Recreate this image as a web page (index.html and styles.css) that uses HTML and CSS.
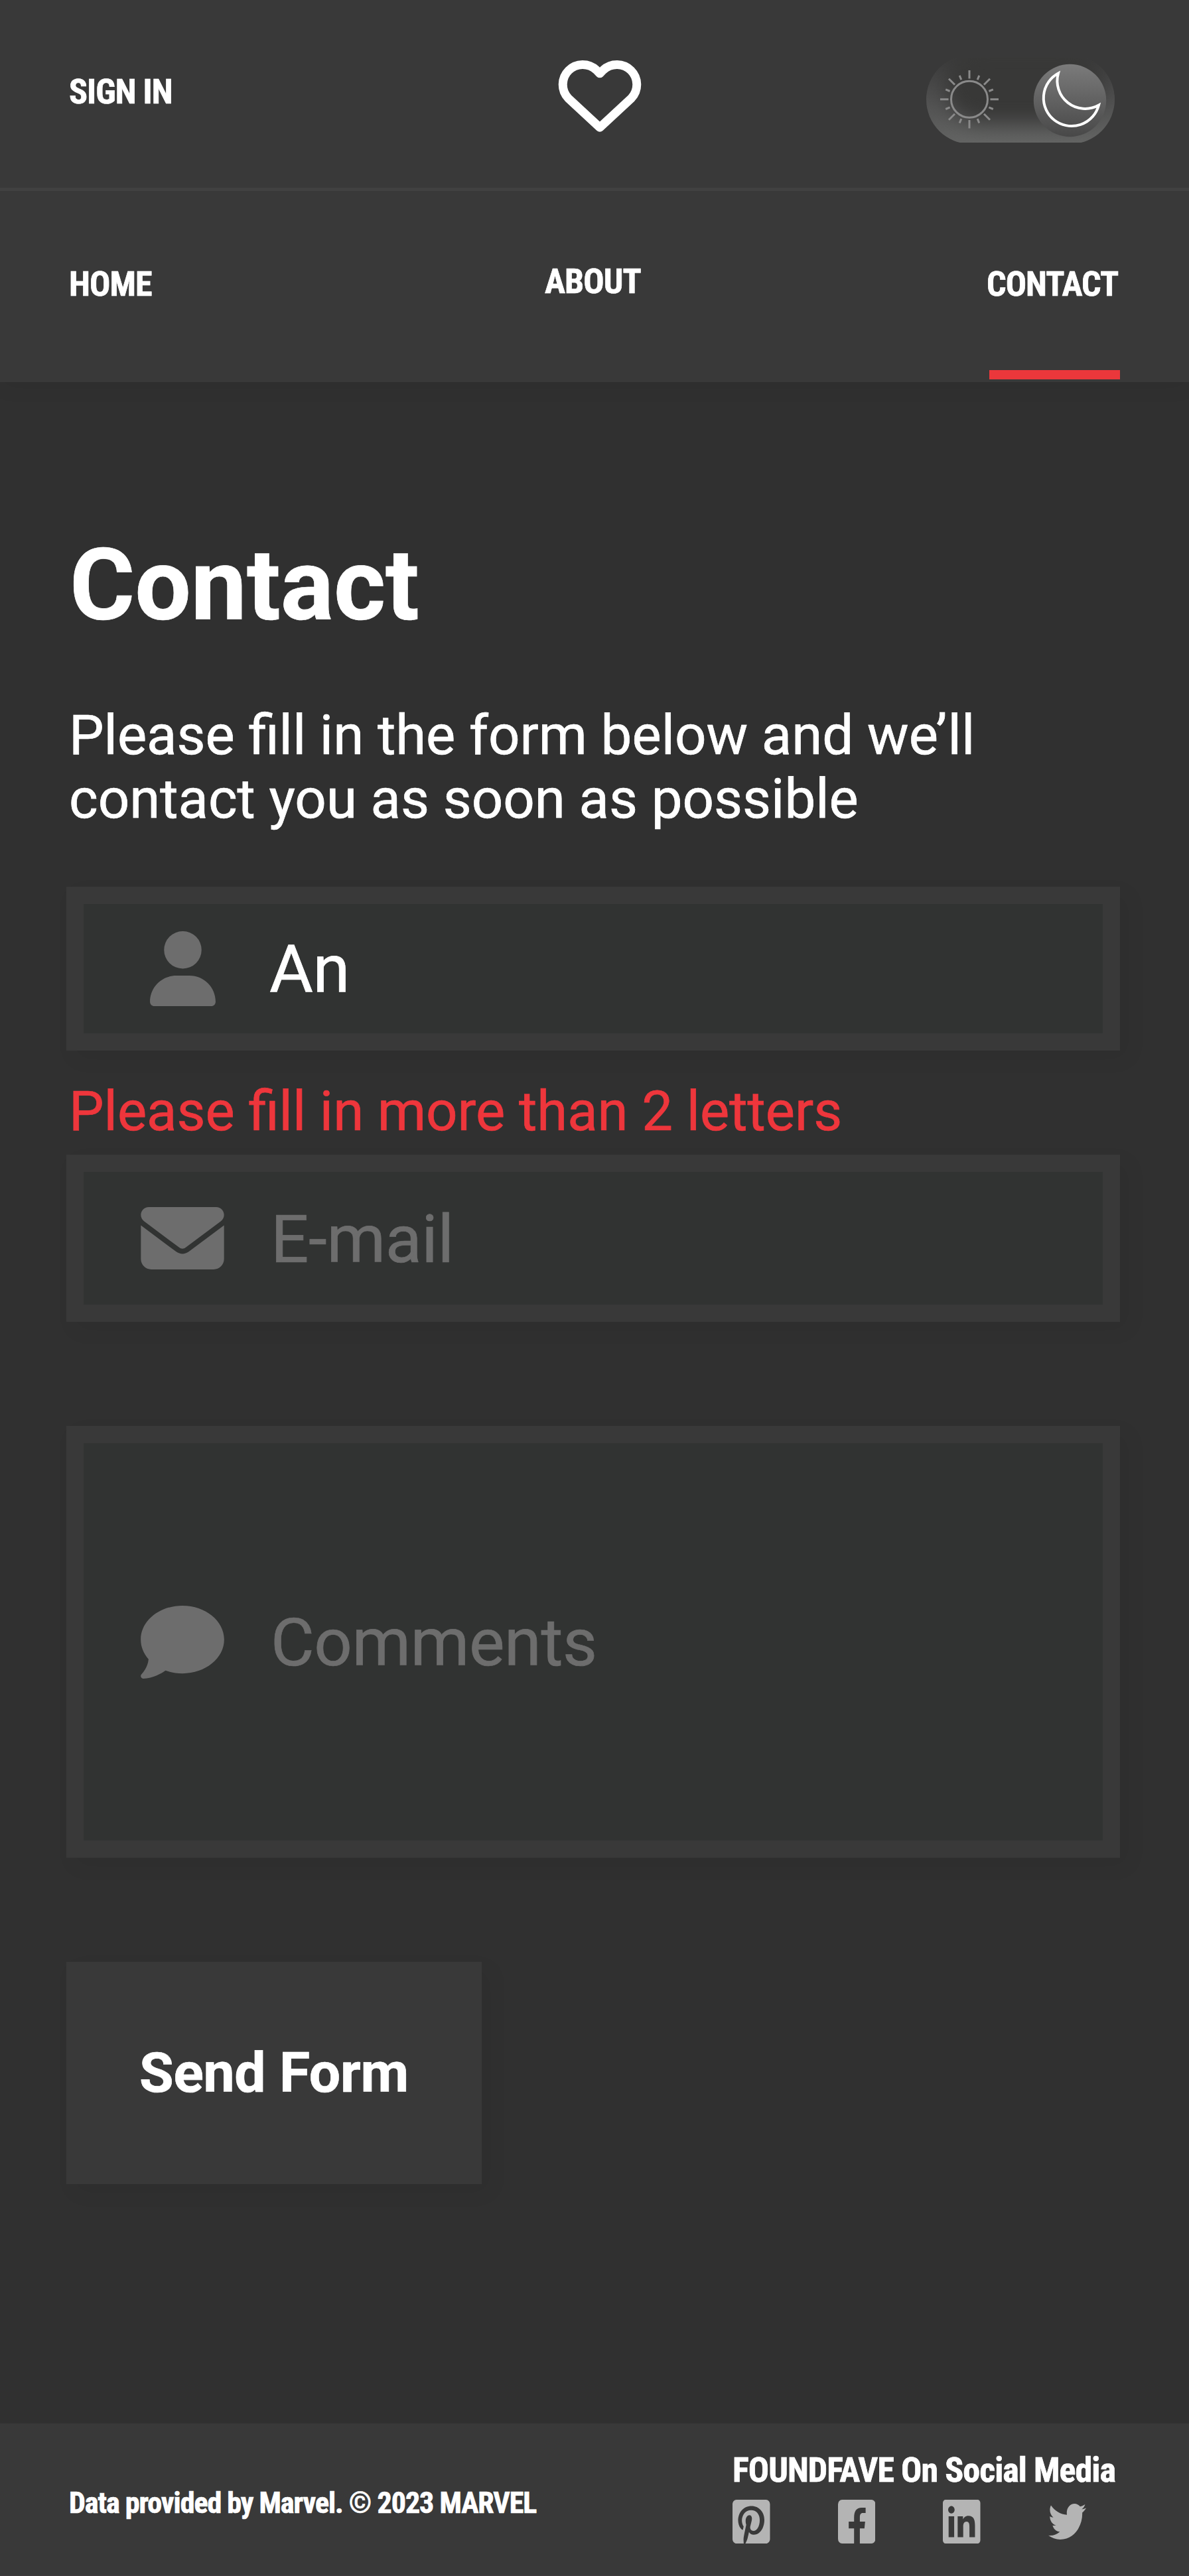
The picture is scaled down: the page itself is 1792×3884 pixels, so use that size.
FILE: index.html
```html
<!DOCTYPE html>
<html lang="en">
<head>
<meta charset="utf-8">
<title>Contact</title>
<link rel="stylesheet" href="styles.css">
</head>
<body>
<header class="header">
  <div class="topbar">
    <a class="cond signin">SIGN IN</a>
    <svg class="heart" viewBox="0 0 126 109"><path d="M63 102.300L15.300 57.900A30 30 0 0 1 57.700 15.500L63 20.800L68.300 15.500A30 30 0 0 1 110.700 57.900Z"/></svg>
    <svg class="toggle" viewBox="1396 87 284 128">
      <defs>
        <linearGradient id="knob" x1="0" y1="0" x2="0" y2="1"><stop offset="0" stop-color="#7b7b7b"/><stop offset="1" stop-color="#484848"/></linearGradient>
        <linearGradient id="rim" x1="0" y1="0" x2="0" y2="1"><stop offset="0" stop-color="#3a3a3a"/><stop offset=".5" stop-color="#505050"/><stop offset="1" stop-color="#646564"/></linearGradient>
        <filter id="soft" x="-30%" y="-30%" width="160%" height="160%" color-interpolation-filters="sRGB"><feGaussianBlur stdDeviation="15"/></filter>
        <clipPath id="pill"><rect x="1396" y="83" width="284" height="134" rx="67"/></clipPath>
      </defs>
      <g clip-path="url(#pill)">
        <rect x="1396" y="83" width="284" height="134" fill="url(#rim)"/>
        <rect x="1424" y="72" width="236" height="112" rx="56" fill="#383837" filter="url(#soft)"/>
      </g>
      <g class="sun">
        <circle cx="1461" cy="149.700" r="27.500"/>
        <path d="M1461 118.500V106M1461 181V193.500M1429.500 149.700H1417M1492.500 149.700H1505M1483 127.700L1492 118.700M1439 171.700L1430 180.700M1483 171.700L1492 180.700M1439 127.700L1430 118.700M1473.200 120.300L1475.800 113.900M1448.800 120.300L1446.200 113.900M1473.200 179.100L1475.800 185.500M1448.800 179.100L1446.200 185.500M1490.400 137.500L1496.800 134.900M1490.400 161.900L1496.800 164.500M1431.600 137.500L1425.200 134.900M1431.600 161.900L1425.200 164.500"/>
      </g>
      <circle cx="1612.500" cy="151.500" r="54.700" fill="url(#knob)"/>
      <path class="moon" d="M1595 110.500A42.300 42.300 0 1 0 1656 158.500A42 42 0 0 1 1595 110.500Z"/>
    </svg>
  </div>
  <nav class="nav">
    <a class="cond">HOME</a>
    <a class="cond about">ABOUT</a>
    <a class="cond active">CONTACT</a>
  </nav>
</header>
<main class="main">
  <h1 class="title">Contact</h1>
  <p class="lead">Please fill in the form below and we’ll<br>contact you as soon as possible</p>
  <form class="form">
    <label class="field name">
      <span class="slot"><svg class="user" viewBox="0 0 448 512"><path d="M224 256A128 128 0 1 0 224 0a128 128 0 1 0 0 256zm-45.700 48C79.800 304 0 383.800 0 482.300C0 498.700 13.300 512 29.700 512H418.300c16.400 0 29.700-13.300 29.700-29.700C448 383.800 368.200 304 269.700 304H178.300z"/></svg></span>
      <span class="value filled">An</span>
    </label>
    <p class="error">Please fill in more than 2 letters</p>
    <label class="field email">
      <span class="slot"><svg class="envelope" viewBox="0 64 512 384"><path d="M48 64C21.500 64 0 85.500 0 112c0 15.100 7.100 29.300 19.200 38.400L236.800 313.600c11.400 8.500 27 8.500 38.400 0L492.800 150.400c12.100-9.100 19.200-23.300 19.200-38.400c0-26.500-21.500-48-48-48H48zM0 176V384c0 35.300 28.700 64 64 64H448c35.300 0 64-28.700 64-64V176L294.400 339.200c-22.800 17.100-54 17.100-76.800 0L0 176z"/></svg></span>
      <span class="value">E-mail</span>
    </label>
    <label class="field comments">
      <span class="slot"><svg class="bubble" viewBox="0 32 512 448"><path d="M512 240c0 114.900-114.600 208-256 208c-37.100 0-72.300-6.400-104.100-17.900c-11.900 8.700-31.300 20.600-54.300 30.600C73.600 471.100 44.700 480 16 480c-6.500 0-12.300-3.900-14.800-9.900c-2.500-6-1.100-12.800 3.400-17.400l.3-.3c.3-.3 .7-.7 1.300-1.400c1.100-1.200 2.800-3.100 4.900-5.700c4.100-5 9.600-12.400 15.200-21.600c10-16.600 19.500-38.400 21.400-62.900C17.700 326.800 0 285.100 0 240C0 125.100 114.600 32 256 32s256 93.100 256 208z"/></svg></span>
      <span class="value">Comments</span>
    </label>
    <button class="send" type="button">Send Form</button>
  </form>
</main>
<footer class="footer">
  <p class="cond credit">Data provided by Marvel. © 2023 MARVEL</p>
  <div class="social">
    <p class="cond social-title">FOUNDFAVE On Social Media</p>
    <div class="icons">
      <svg class="square" viewBox="0 32 448 448" preserveAspectRatio="none"><path d="M448 80v352c0 26.500-21.500 48-48 48H154.400c9.800-16.400 22.400-40 27.400-59.300 3-11.500 15.300-58.400 15.300-58.400 8 15.300 31.400 28.200 56.300 28.200 74.100 0 127.400-68.100 127.400-152.700 0-81.100-66.200-141.800-151.400-141.800-106 0-162.200 71.100-162.200 148.600 0 36 19.200 80.800 49.800 95.100 4.700 2.200 7.100 1.200 8.200-3.300 .8-3.400 5-20.100 6.800-27.800 .6-2.500 .3-4.600-1.700-7-10.100-12.300-18.300-34.900-18.300-56 0-54.200 41-106.600 110.900-106.600 60.300 0 102.600 41.100 102.600 99.900 0 66.400-33.500 112.400-77.200 112.400-24.100 0-42.100-19.900-36.400-44.400 6.900-29.200 20.300-60.700 20.300-81.800 0-53-75.500-45.700-75.500 25 0 21.700 7.300 36.500 7.300 36.500-31.400 132.800-36.100 134.500-29.600 192.600l2.200 .8H48c-26.500 0-48-21.500-48-48V80c0-26.500 21.500-48 48-48h352c26.500 0 48 21.500 48 48z"/></svg>
      <svg class="square" viewBox="0 32 448 448" preserveAspectRatio="none"><path d="M400 32H48A48 48 0 0 0 0 80v352a48 48 0 0 0 48 48H192V325H128V256H192V216C192 148 220 113 282 113H330V168H297C271 168 261 183 261 212V256H324L316 325H261V480H400a48 48 0 0 0 48-48V80a48 48 0 0 0-48-48z"/></svg>
      <svg class="square" viewBox="0 32 448 448" preserveAspectRatio="none"><path d="M416 32H31.900C14.300 32 0 46.500 0 64.300v383.400C0 465.500 14.300 480 31.900 480H416c17.600 0 32-14.500 32-32.300V64.300c0-17.800-14.400-32.300-32-32.300zM135.400 416H69V202.200h66.500V416zm-33.200-243c-21.300 0-38.500-17.300-38.500-38.500S80.900 96 102.200 96c21.200 0 38.500 17.300 38.500 38.500 0 21.300-17.200 38.500-38.500 38.500zm282.100 243h-66.400V312c0-24.800-.5-56.700-34.500-56.700-34.600 0-39.900 27-39.900 54.900V416h-66.400V202.200h63.700v29.200h.9c8.900-16.800 30.600-34.500 62.900-34.500 67.200 0 79.700 44.300 79.700 101.900V416z"/></svg>
      <svg class="bird" viewBox="0 48 512 416" preserveAspectRatio="none"><path d="M459.370 151.716c.325 4.548.325 9.097.325 13.645 0 138.720-105.583 298.558-298.558 298.558-59.452 0-114.680-17.219-161.137-47.106 8.447.974 16.568 1.299 25.340 1.299 49.055 0 94.213-16.568 130.274-44.832-46.132-.975-84.792-31.188-98.112-72.772 6.498.974 12.995 1.624 19.818 1.624 9.421 0 18.843-1.300 27.614-3.573-48.081-9.747-84.143-51.980-84.143-102.985v-1.299c13.969 7.797 30.214 12.670 47.431 13.319-28.264-18.843-46.781-51.005-46.781-87.391 0-19.492 5.197-37.360 14.294-52.954 51.655 63.675 129.300 105.258 216.365 109.807-1.624-7.797-2.599-15.918-2.599-24.040 0-57.828 46.782-104.934 104.934-104.934 30.213 0 57.502 12.670 76.670 33.137 23.715-4.548 46.456-13.320 66.599-25.340-7.798 24.366-24.366 44.833-46.132 57.827 21.117-2.273 41.584-8.122 60.426-16.243-14.292 20.791-32.161 39.308-52.628 54.253z"/></svg>
    </div>
  </div>
</footer>
</body>
</html>
```
FILE: styles.css
```css
* { box-sizing: border-box; }
body { margin: 0; width: 1792px; height: 3884px; display: flex; flex-direction: column; background: #303030; color: #fff; font-family: Roboto, sans-serif; -webkit-text-stroke: .7px currentColor; }
h1, p { margin: 0; }
svg { display: block; flex: none; }
.cond { font-family: "Roboto Condensed", Roboto, sans-serif; font-stretch: 75%; font-weight: 700; font-size: 52px; line-height: 60px; letter-spacing: -.95px; white-space: nowrap; }
.header { height: 576px; background: #393939; box-shadow: 0 8px 30px rgba(0, 0, 0, .05); }
.topbar { height: 288px; border-bottom: 5px solid #414141; padding: 87px 112px 0 104px; display: grid; grid-template-columns: 737px 126px 1fr; align-items: start; }
.signin { margin-top: 22px; }
.heart { width: 126px; height: 109px; margin-top: 3px; fill: none; stroke: #fff; stroke-width: 13; stroke-linejoin: round; }
.toggle { width: 284px; height: 128px; justify-self: end; }
.sun { fill: none; stroke: #8a8a8a; stroke-width: 3; }
.moon { fill: none; stroke: #fff; stroke-width: 4; }
.nav { height: 288px; padding: 111px 104px 4px; display: grid; grid-template-columns: 717px 1fr 197px; align-items: start; }
.about { margin-top: -4px; }
.active { height: 173px; border-bottom: 14px solid #eb373b; text-indent: -4px; }
.main { flex: 1; padding: 0 104px 0 100px; }
.title { margin: 219px 0 0 5px; font-size: 150px; line-height: 176px; font-weight: 700; }
.lead { margin: 90px 0 0 4px; font-size: 83.4px; line-height: 96px; white-space: nowrap; }
.form { margin-top: 84px; display: flex; flex-direction: column; align-items: flex-start; }
.field { display: flex; align-items: center; width: 1588px; border: 26px solid #393939; background: #313332; box-shadow: 12px 12px 30px rgba(0, 0, 0, .05); }
.name { height: 247px; }
.email { height: 252px; }
.comments { height: 651px; margin-top: 157px; }
.slot { width: 126px; margin: 0 70px 0 86px; display: flex; justify-content: center; fill: #6d6d6d; }
.user { width: 99px; height: 113px; }
.envelope { width: 126px; height: 94px; }
.bubble { width: 126px; height: 110px; }
.value { padding-top: 3px; font-size: 101px; line-height: 118px; letter-spacing: -.4px; color: #6d6d6d; }
.filled { margin-left: -2px; color: #fff; }
.error { height: 157px; padding: 43px 0 0 4px; font-size: 83.4px; line-height: 98px; color: #ee363c; white-space: nowrap; }
.send { width: 626px; height: 335px; margin-top: 157px; padding: 1px 0 0; border: 0; background: #393939; color: #fff; font: 700 84px/98px Roboto, sans-serif; letter-spacing: -.3px; box-shadow: 12px 12px 30px rgba(0, 0, 0, .05); }
.footer { height: 230px; padding: 41px 111px 0 104px; display: flex; justify-content: space-between; background: #393939; border-bottom: 1px solid #403a3d; }
.credit { margin-top: 49px; font-size: 44px; letter-spacing: -1.03px; }
.social { width: 577px; }
.icons { display: flex; align-items: flex-start; gap: 102px; margin-top: 14px; fill: #b4b4b4; }
.square { width: 56.500px; height: 66px; }
.bird { width: 57px; height: 54px; margin-top: 6px; }
```
